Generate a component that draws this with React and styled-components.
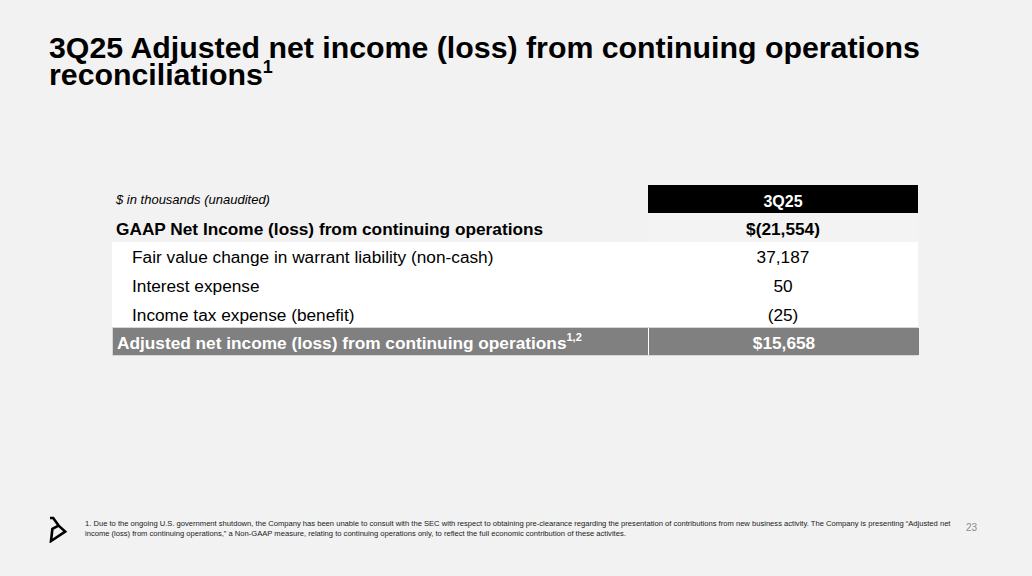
import React from "react";
import styled, { createGlobalStyle } from "styled-components";

const Global = createGlobalStyle`
  html, body { margin: 0; padding: 0; background: #f2f2f2; }
  body { font-family: "Liberation Sans", Arial, sans-serif; color: #000; }
`;

const Slide = styled.div`
  width: 1032px;
  height: 576px;
  box-sizing: border-box;
  background: #f2f2f2;
  display: flex;
  flex-direction: column;
  padding: 34px 0 0 49px;
  overflow: hidden;
`;

const Title = styled.h1`
  margin: 0;
  font-size: 30.3px;
  line-height: 27px;
  font-weight: 700;
  letter-spacing: 0;
  width: 960px;
  sup {
    font-size: 18px;
    line-height: 0;
    vertical-align: 0;
    position: relative;
    top: -12px;
  }
`;

const TableWrap = styled.div`
  margin: 97px 0 0 63px;
  width: 806px;
`;

const Row = styled.div`
  display: grid;
  grid-template-columns: 535px 270px;
  column-gap: 1px;
  height: ${p => p.$h || 28.6}px;
  background: ${p => (p.$white || p.$total ? "#fff" : "transparent")};
  ${p => p.$total && "border: 1px solid #d6d6d6; box-sizing: border-box; height: 29px;"}
`;

const Label = styled.div`
  display: flex;
  align-items: center;
  padding-left: ${p => (p.$indent ? 20 : 4)}px;
  padding-top: ${p => (p.$small ? 1 : 4)}px;
  box-sizing: border-box;
  font-size: ${p => (p.$small ? 13 : 17.25)}px;
  font-weight: ${p => (p.$bold ? 700 : 400)};
  font-style: ${p => (p.$italic ? "italic" : "normal")};
  color: ${p => (p.$light ? "#fff" : "#000")};
  background: ${p => p.$bg || "transparent"};
  white-space: nowrap;
  sup {
    font-size: 11px;
    line-height: 0;
    position: relative;
    top: -7px;
    vertical-align: 0;
  }
`;

const Value = styled.div`
  display: flex;
  align-items: center;
  justify-content: center;
  font-size: ${p => (p.$head ? 16 : 17.25)}px;
  font-weight: ${p => (p.$bold ? 700 : 400)};
  color: ${p => (p.$light ? "#fff" : "#000")};
  background: ${p => p.$bg || "transparent"};
  padding-top: ${p => (p.$head ? 6 : 4)}px;
  box-sizing: border-box;
`;

const Footer = styled.div`
  margin-top: auto;
  display: flex;
  align-items: flex-start;
  padding: 0 0 33px 0;
`;

const Logo = styled.svg`
  width: 18px;
  height: 27px;
  flex: none;
  margin-top: 1px;
`;

const Note = styled.p`
  margin: 0 0 0 18px;
  width: 868px;
  font-size: 7.6px;
  line-height: 10px;
  color: #1a1a1a;
  padding-top: 4px;
`;

const PageNum = styled.div`
  margin-left: 13px;
  margin-top: 7px;
  font-size: 10px;
  color: #8c8c8c;
`;

export default function App() {
  return (
    <>
      <Global />
      <Slide>
        <Title>
          3Q25 Adjusted net income (loss) from continuing operations reconciliations<sup>1</sup>
        </Title>
        <TableWrap>
          <Row $h={28}>
            <Label $italic $small>$ in thousands (unaudited)</Label>
            <Value $head $bold $light $bg="#000">3Q25</Value>
          </Row>
          <Row>
            <Label $bold>GAAP Net Income (loss) from continuing operations</Label>
            <Value $bold $bg="#f3f3f3">$(21,554)</Value>
          </Row>
          <Row $white>
            <Label $indent>Fair value change in warrant liability (non-cash)</Label>
            <Value>37,187</Value>
          </Row>
          <Row $white>
            <Label $indent>Interest expense</Label>
            <Value>50</Value>
          </Row>
          <Row $white>
            <Label $indent>Income tax expense (benefit)</Label>
            <Value>(25)</Value>
          </Row>
          <Row $total>
            <Label $bold $light $bg="#808080">
              Adjusted net income (loss) from continuing operations<sup>1,2</sup>
            </Label>
            <Value $bold $light $bg="#808080">$15,658</Value>
          </Row>
        </TableWrap>
        <Footer>
          <Logo viewBox="0 0 18 27">
            <path
              d="M1 2 H4.2 L9.6 9.6 L3.4 12.8 L2 25 L16.2 15.6 L9.6 9.6"
              fill="none"
              stroke="#000"
              strokeWidth="2.6"
              strokeLinejoin="miter"
              strokeMiterlimit="10"
            />
          </Logo>
          <Note>
            1. Due to the ongoing U.S. government shutdown, the Company has been unable to consult with the SEC with respect to obtaining pre-clearance regarding the presentation of contributions from new business activity. The Company is presenting “Adjusted net income (loss) from continuing operations,” a Non-GAAP measure, relating to continuing operations only, to reflect the full economic contribution of these activites.
          </Note>
          <PageNum>23</PageNum>
        </Footer>
      </Slide>
    </>
  );
}
